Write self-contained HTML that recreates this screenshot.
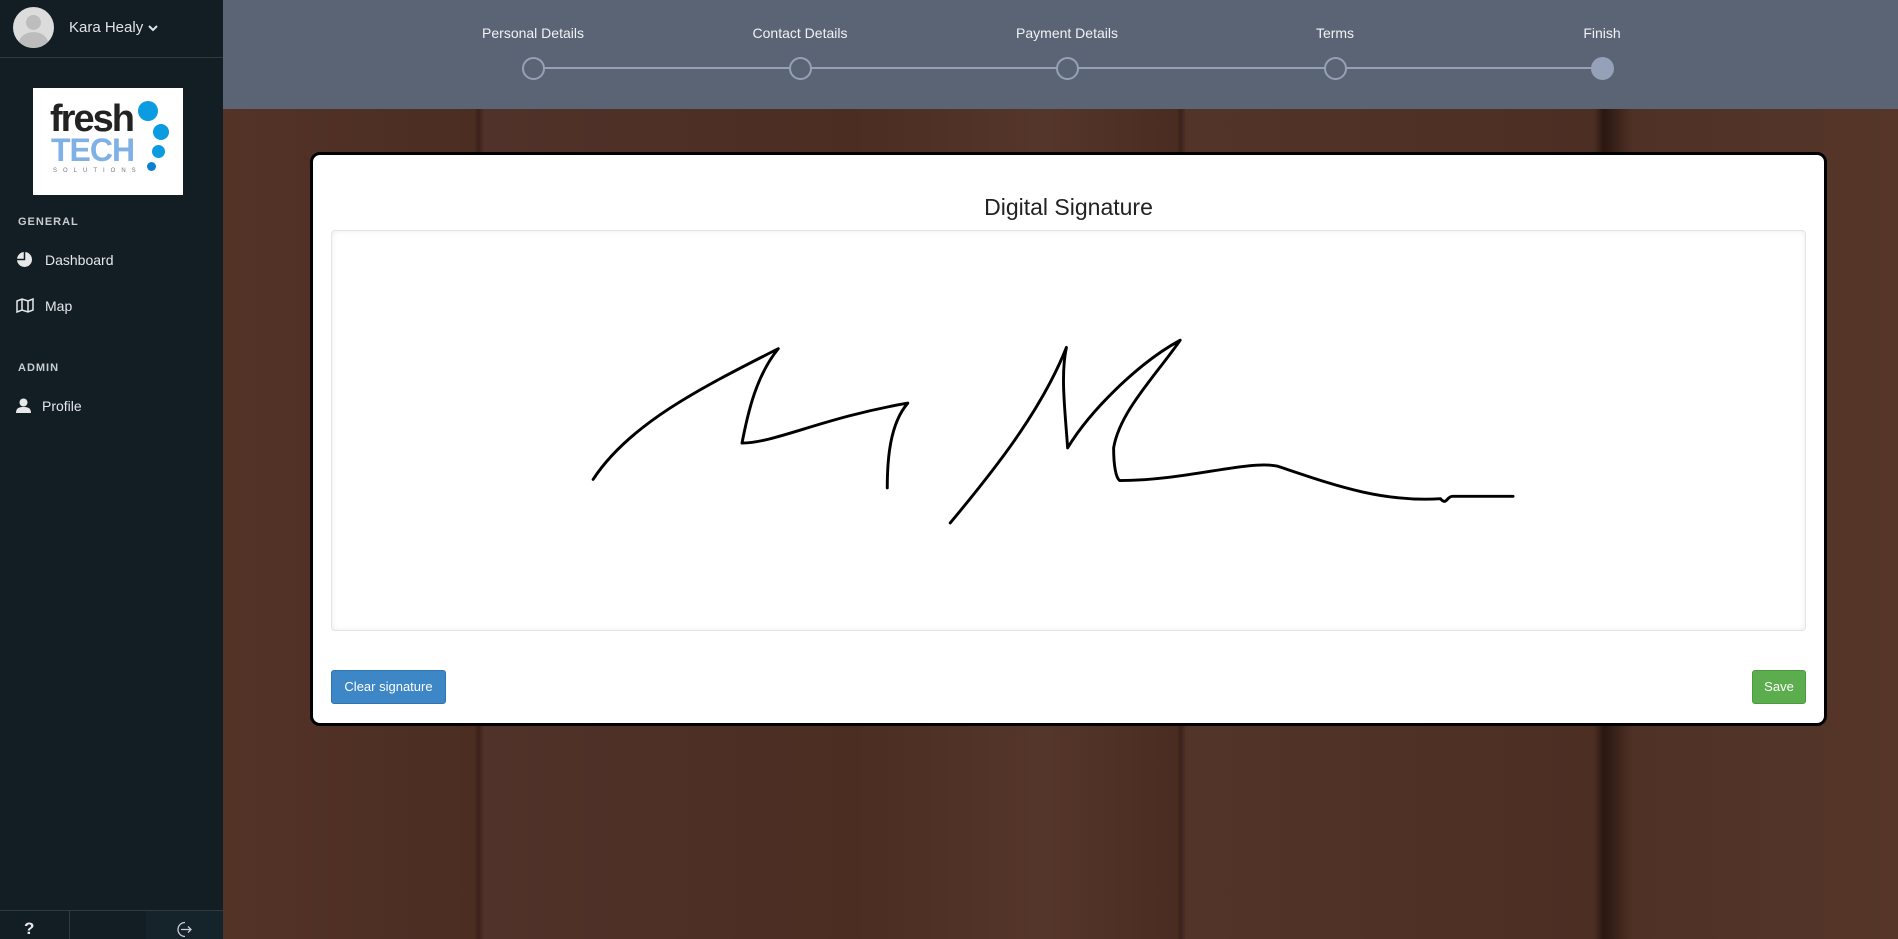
<!DOCTYPE html>
<html><head><meta charset="utf-8"><style>
*{margin:0;padding:0;box-sizing:border-box}
body{width:1898px;height:939px;overflow:hidden;font-family:"Liberation Sans",sans-serif;position:relative;
background:linear-gradient(90deg,#4d2f24 0,#553428 10%,#4b2d22 25%,#3a2119 25.2%,#50322a 25.5%,#4b2d22 45%,#55362a 55%,#4a2c21 62%,#3a2119 62.2%,#533428 62.5%,#4c2e23 84%,#2a1710 84.5%,#4f3126 86%,#553629 100%)}
.side{position:absolute;left:0;top:0;width:223px;height:939px;background:#121e24}
.hdr{position:absolute;left:223px;top:0;width:1675px;height:109px;background:#5b6475}
.lbl{position:absolute;top:25px;color:#f0f2f5;font-size:14px;transform:translateX(-50%)}
.dot{position:absolute;top:57px;width:23px;height:23px;border-radius:50%;border:2px solid #95a1b8;background:#5b6475}
.card{position:absolute;left:310px;top:152px;width:1517px;height:574px;background:#fff;border:3px solid #000;border-radius:10px}
.sig{position:absolute;left:331px;top:230px;width:1475px;height:401px;border:1px solid #e4e4e4;border-radius:4px;box-shadow:inset 0 0 6px rgba(0,0,0,.08);background:#fff}
.btn{position:absolute;top:670px;height:34px;border-radius:3px;color:#fff;font-size:13px;line-height:32px;text-align:center}
.sm{position:absolute;left:18px;font-size:11px;font-weight:bold;color:#c8cdd0;letter-spacing:1px}
.it{position:absolute;color:#e6e8ea;font-size:14px}
</style></head><body>
<div class="side">
 <div style="position:absolute;left:13px;top:7px;width:41px;height:41px;border-radius:50%;background:#dcdcdc;overflow:hidden">
  <div style="position:absolute;left:13px;top:8px;width:15px;height:15px;border-radius:50%;background:#bdbdbd"></div>
  <div style="position:absolute;left:6px;top:25px;width:29px;height:22px;border-radius:50%;background:#bdbdbd"></div></div>
 <div class="it" style="left:69px;top:19px;font-size:15px;color:#dfe3e6">Kara Healy</div>
 <svg style="position:absolute;left:148px;top:24px" width="10" height="8"><path d="M1 2l4 4 4-4" stroke="#dfe3e6" stroke-width="2" fill="none"/></svg>
 <div style="position:absolute;left:0;top:57px;width:223px;height:1px;background:#2e3a42"></div>
 <div style="position:absolute;left:33px;top:88px;width:150px;height:107px;background:#fff">
  <div style="position:absolute;left:17px;top:10px;font-size:38px;font-weight:bold;color:#222;letter-spacing:-2px">fresh</div>
  <div style="position:absolute;left:18px;top:44px;font-size:32px;font-weight:bold;color:#7fb0e6;letter-spacing:-1px">TECH</div>
  <div style="position:absolute;left:20px;top:80px;font-size:6px;color:#777;letter-spacing:6px">SOLUTIONS</div>
  <div style="position:absolute;left:105px;top:13px;width:20px;height:20px;border-radius:50%;background:#0a9be0"></div>
  <div style="position:absolute;left:120px;top:36px;width:16px;height:16px;border-radius:50%;background:#0a9be0"></div>
  <div style="position:absolute;left:119px;top:57px;width:13px;height:13px;border-radius:50%;background:#0a9be0"></div>
  <div style="position:absolute;left:114px;top:74px;width:9px;height:9px;border-radius:50%;background:#0a80d0"></div>
 </div>
 <div class="sm" style="top:216px">GENERAL</div>
 <svg style="position:absolute;left:16px;top:251px" width="17" height="17"><circle cx="8.5" cy="8.5" r="7.5" fill="#e6e8ea"/><path d="M8.5 1v7.5H1" stroke="#121e24" stroke-width="1.5" fill="none"/></svg>
 <div class="it" style="left:45px;top:252px">Dashboard</div>
 <svg style="position:absolute;left:16px;top:298px" width="18" height="15"><path d="M1 3l5-2 6 2 5-2v11l-5 2-6-2-5 2z M6 1v11 M12 3v11" stroke="#e6e8ea" stroke-width="1.5" fill="none"/></svg>
 <div class="it" style="left:45px;top:298px">Map</div>
 <div class="sm" style="top:362px">ADMIN</div>
 <svg style="position:absolute;left:16px;top:398px" width="15" height="15"><circle cx="7.5" cy="4.5" r="4" fill="#e6e8ea"/><path d="M0 15c0-5 3-6 7.5-6s7.5 1 7.5 6z" fill="#e6e8ea"/></svg>
 <div class="it" style="left:42px;top:398px">Profile</div>
 <div style="position:absolute;left:0;top:910px;width:223px;height:1px;background:#2e3a42"></div>
 <div style="position:absolute;left:69px;top:910px;width:1px;height:29px;background:#2e3a42"></div>
 <div style="position:absolute;left:146px;top:911px;width:77px;height:28px;background:#15232a"></div>
 <div style="position:absolute;left:24px;top:919px;color:#e6e8ea;font-weight:bold;font-size:17px">?</div>
 <svg style="position:absolute;left:175px;top:920px" width="18" height="18"><path d="M10 2.5A7 7 0 1 0 10 16.5" stroke="#ccd" stroke-width="1.3" fill="none"/><path d="M6 9.5h10M13 6.5l3 3-3 3" stroke="#ccd" stroke-width="1.3" fill="none"/></svg>
</div>
<div class="hdr"></div>
<div style="position:absolute;left:533px;top:67px;width:1069px;height:2px;background:#95a1b8"></div>
<div class="lbl" style="left:533px">Personal Details</div>
<div class="lbl" style="left:800px">Contact Details</div>
<div class="lbl" style="left:1067px">Payment Details</div>
<div class="lbl" style="left:1335px">Terms</div>
<div class="lbl" style="left:1602px">Finish</div>
<div class="dot" style="left:522px"></div>
<div class="dot" style="left:789px"></div>
<div class="dot" style="left:1056px"></div>
<div class="dot" style="left:1324px"></div>
<div class="dot" style="left:1591px;background:#95a1b8;border-color:#95a1b8"></div>
<div class="card"></div>
<div style="position:absolute;left:310px;width:1517px;top:194px;text-align:center;font-size:23px;color:#222">Digital Signature</div>
<div class="sig"></div>
<div class="btn" style="left:331px;width:115px;background:#3d87c7;border:1px solid #2f74b0">Clear signature</div>
<div class="btn" style="left:1752px;width:54px;background:#5cad4e;border:1px solid #4c9a40">Save</div>
<svg style="position:absolute;left:0;top:0" width="1898" height="939" viewBox="0 0 1568 775.7">
<path d="M490 396C520 350 580 320 643 288C625 310 618 340 613 366C640 366 680 345 750 333C735 350 733 380 733 403" stroke="#000" stroke-width="2.4" fill="none" stroke-linecap="round" stroke-linejoin="round"/>
<path d="M785 432C820 390 860 340 881 287C876 310 880 340 882 370C900 340 940 300 975 281C955 310 925 340 920 370C920 385 922 395 925 397C980 397 1030 380 1055 385C1100 400 1140 415 1190 412C1195 418 1195 410 1200 410L1250 410" stroke="#000" stroke-width="2.4" fill="none" stroke-linecap="round" stroke-linejoin="round"/>
</svg>
</body></html>
